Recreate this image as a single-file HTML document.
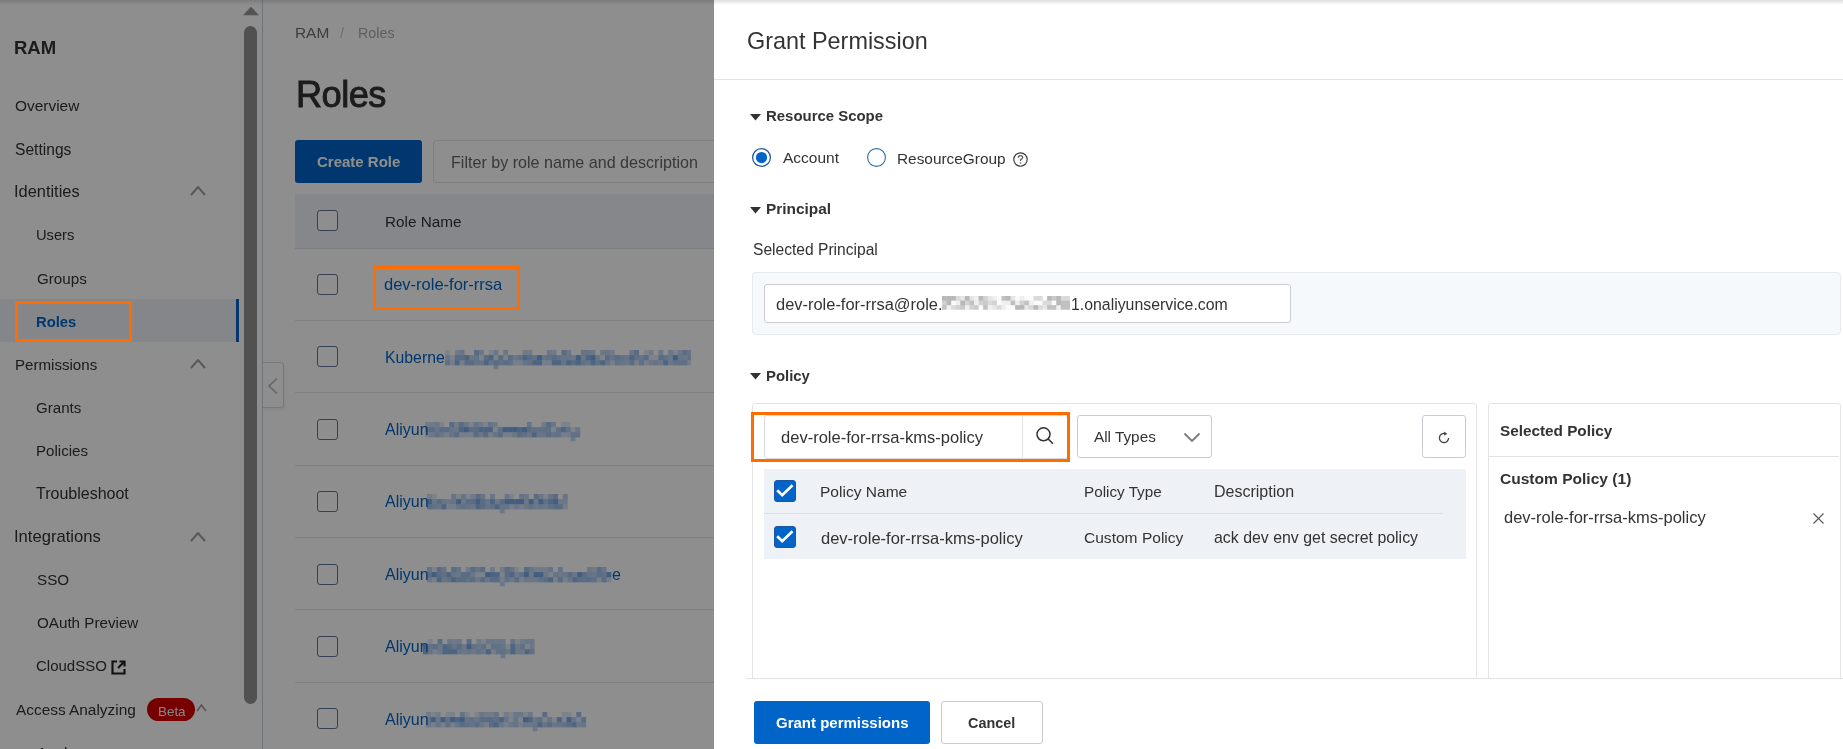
<!DOCTYPE html>
<html><head><meta charset="utf-8"><style>
html,body{margin:0;padding:0;width:1843px;height:749px;overflow:hidden;background:#fff;}
body{position:relative;font-family:"Liberation Sans",sans-serif;}
.t{position:absolute;white-space:nowrap;line-height:1;will-change:transform;font-family:"Liberation Sans",sans-serif;}
</style></head><body>
<div style="position:absolute;left:262px;top:0px;width:1px;height:749px;background:#c9d3dc"></div>
<div style="position:absolute;left:0px;top:299px;width:239px;height:43px;background:#edf1f7"></div>
<div style="position:absolute;left:236px;top:299px;width:3px;height:43px;background:#0064c8"></div>
<div class="t" style="left:14.1px;top:39.4px;font-size:18.5px;font-weight:700;color:#333;">RAM</div>
<div class="t" style="left:14.9px;top:97.8px;font-size:15.45px;font-weight:400;color:#333;">Overview</div>
<div class="t" style="left:14.6px;top:141.5px;font-size:15.6px;font-weight:400;color:#333;">Settings</div>
<div class="t" style="left:14.0px;top:183.4px;font-size:16.4px;font-weight:400;color:#333;">Identities</div>
<div class="t" style="left:35.9px;top:227.5px;font-size:14.7px;font-weight:400;color:#333;">Users</div>
<div class="t" style="left:36.5px;top:270.6px;font-size:15.2px;font-weight:400;color:#333;">Groups</div>
<div class="t" style="left:35.8px;top:314.6px;font-size:14.8px;font-weight:700;color:#0064c8;">Roles</div>
<div class="t" style="left:14.9px;top:356.8px;font-size:15.1px;font-weight:400;color:#333;">Permissions</div>
<div class="t" style="left:36.1px;top:399.5px;font-size:15.1px;font-weight:400;color:#333;">Grants</div>
<div class="t" style="left:35.6px;top:442.9px;font-size:15.1px;font-weight:400;color:#333;">Policies</div>
<div class="t" style="left:36.0px;top:485.8px;font-size:16.0px;font-weight:400;color:#333;">Troubleshoot</div>
<div class="t" style="left:13.6px;top:529.1px;font-size:16.6px;font-weight:400;color:#333;">Integrations</div>
<div class="t" style="left:36.5px;top:572.3px;font-size:15.2px;font-weight:400;color:#333;">SSO</div>
<div class="t" style="left:36.5px;top:615.4px;font-size:15.2px;font-weight:400;color:#333;">OAuth Preview</div>
<div class="t" style="left:35.9px;top:658.1px;font-size:15.0px;font-weight:400;color:#333;">CloudSSO</div>
<div class="t" style="left:15.6px;top:701.9px;font-size:15.4px;font-weight:400;color:#333;">Access Analyzing</div>
<div class="t" style="left:36.5px;top:744.7px;font-size:15.2px;font-weight:400;color:#333;">Analyzer</div>
<svg style="position:absolute;left:190px;top:186px" width="16" height="10" viewBox="0 0 16 10"><polyline points="1,9 8.0,1 15,9" fill="none" stroke="#9c9c9c" stroke-width="1.9"/></svg>
<svg style="position:absolute;left:190px;top:359px" width="16" height="10" viewBox="0 0 16 10"><polyline points="1,9 8.0,1 15,9" fill="none" stroke="#9c9c9c" stroke-width="1.9"/></svg>
<svg style="position:absolute;left:190px;top:532px" width="16" height="10" viewBox="0 0 16 10"><polyline points="1,9 8.0,1 15,9" fill="none" stroke="#9c9c9c" stroke-width="1.9"/></svg>
<svg style="position:absolute;left:196px;top:704px" width="11" height="8" viewBox="0 0 11 8"><polyline points="1,7 5.5,1 10,7" fill="none" stroke="#999" stroke-width="1.6"/></svg>
<svg style="position:absolute;left:111px;top:660px" width="15" height="15" viewBox="0 0 15 15"><path d="M6 1.5H1.5V13.5H13.5V9" fill="none" stroke="#222" stroke-width="2.2"/><path d="M7 8L13 2M8.5 1.5H13.5V6.5" fill="none" stroke="#222" stroke-width="2.2"/></svg>
<div style="position:absolute;left:147px;top:698px;width:48px;height:23px;border-radius:12px;background:#d40000;"></div>
<div class="t" style="left:157.5px;top:704.5px;font-size:13.4px;font-weight:400;color:#f0f0f0;">Beta</div>
<svg style="position:absolute;left:243px;top:6px" width="16" height="10" viewBox="0 0 16 10"><polygon points="0,9.2 8,0.7 16,9.2" fill="#969696"/></svg>
<div style="position:absolute;left:244px;top:26px;width:13px;height:678px;background:#929292;border-radius:6.5px"></div>
<div style="position:absolute;left:263px;top:362px;width:20px;height:44px;border:1px solid #d5d9de;border-left:none;border-radius:0 4px 4px 0;background:#fff;box-shadow:1px 2px 3px rgba(0,0,0,0.06)"></div>
<svg style="position:absolute;left:267px;top:377px" width="12" height="18" viewBox="0 0 12 18"><polyline points="10,1.5 2,9 10,16.5" fill="none" stroke="#b4b4b4" stroke-width="1.6"/></svg>
<div class="t" style="left:295.2px;top:24.7px;font-size:15.4px;font-weight:400;color:#707070;">RAM</div>
<div class="t" style="left:340.0px;top:25.6px;font-size:14.7px;font-weight:400;color:#c8c8c8;">/</div>
<div class="t" style="left:358.0px;top:26.1px;font-size:14.3px;font-weight:400;color:#aaa;">Roles</div>
<div class="t" style="left:296.1px;top:76.9px;font-size:36.2px;font-weight:400;color:#333;letter-spacing:-0.55px;-webkit-text-stroke:0.9px #333">Roles</div>
<div style="position:absolute;left:295px;top:140px;width:127px;height:43px;background:#0064c8;border-radius:3px"></div>
<div class="t" style="left:317.1px;top:154.2px;font-size:15.0px;font-weight:700;color:#fff;">Create Role</div>
<div style="position:absolute;left:433px;top:140px;width:400px;height:41px;border:1px solid #e2e4e8;border-radius:3px;background:#fff"></div>
<div class="t" style="left:451.3px;top:154.4px;font-size:16.1px;font-weight:400;color:#666;">Filter by role name and description</div>
<div style="position:absolute;left:295px;top:194px;width:600px;height:54px;background:#f0f3f9;border-bottom:1px solid #dde1e7"></div>
<div style="position:absolute;left:317px;top:210px;width:19px;height:19px;border:1px solid #5f7594;border-radius:3px;background:#fff"></div>
<div class="t" style="left:385.1px;top:213.8px;font-size:15.3px;font-weight:400;color:#333;">Role Name</div>
<div style="position:absolute;left:317px;top:274px;width:19px;height:19px;border:1px solid #5f7594;border-radius:3px;background:#fff"></div>
<div class="t" style="left:384.2px;top:275.7px;font-size:16.5px;font-weight:400;color:#0064c8;">dev-role-for-rrsa</div>
<div style="position:absolute;left:295px;top:320px;width:600px;height:1px;background:#e3e6ea"></div>
<div style="position:absolute;left:317px;top:346px;width:19px;height:19px;border:1px solid #5f7594;border-radius:3px;background:#fff"></div>
<div class="t" style="left:384.5px;top:349.7px;font-size:15.8px;font-weight:400;color:#0064c8;">Kuberne</div>
<svg style="position:absolute;left:445px;top:349.5px" width="246" height="21" fill="#2f78d8" ><rect x="0.0" y="0.0" width="4.90" height="5.15" fill-opacity="0.15"/><rect x="9.7" y="0.0" width="4.90" height="5.15" fill-opacity="0.25"/><rect x="14.5" y="0.0" width="4.90" height="5.15" fill-opacity="0.35"/><rect x="29.1" y="0.0" width="4.90" height="5.15" fill-opacity="0.45"/><rect x="33.9" y="0.0" width="4.90" height="5.15" fill-opacity="0.3"/><rect x="43.6" y="0.0" width="4.90" height="5.15" fill-opacity="0.15"/><rect x="48.5" y="0.0" width="4.90" height="5.15" fill-opacity="0.3"/><rect x="58.2" y="0.0" width="4.90" height="5.15" fill-opacity="0.3"/><rect x="77.6" y="0.0" width="4.90" height="5.15" fill-opacity="0.25"/><rect x="82.4" y="0.0" width="4.90" height="5.15" fill-opacity="0.25"/><rect x="101.8" y="0.0" width="4.90" height="5.15" fill-opacity="0.3"/><rect x="106.7" y="0.0" width="4.90" height="5.15" fill-opacity="0.25"/><rect x="116.4" y="0.0" width="4.90" height="5.15" fill-opacity="0.45"/><rect x="121.2" y="0.0" width="4.90" height="5.15" fill-opacity="0.3"/><rect x="135.8" y="0.0" width="4.90" height="5.15" fill-opacity="0.35"/><rect x="140.6" y="0.0" width="4.90" height="5.15" fill-opacity="0.35"/><rect x="145.5" y="0.0" width="4.90" height="5.15" fill-opacity="0.3"/><rect x="155.2" y="0.0" width="4.90" height="5.15" fill-opacity="0.3"/><rect x="160.0" y="0.0" width="4.90" height="5.15" fill-opacity="0.3"/><rect x="164.9" y="0.0" width="4.90" height="5.15" fill-opacity="0.25"/><rect x="184.3" y="0.0" width="4.90" height="5.15" fill-opacity="0.3"/><rect x="189.1" y="0.0" width="4.90" height="5.15" fill-opacity="0.45"/><rect x="198.8" y="0.0" width="4.90" height="5.15" fill-opacity="0.15"/><rect x="203.7" y="0.0" width="4.90" height="5.15" fill-opacity="0.25"/><rect x="213.4" y="0.0" width="4.90" height="5.15" fill-opacity="0.3"/><rect x="223.1" y="0.0" width="4.90" height="5.15" fill-opacity="0.3"/><rect x="227.9" y="0.0" width="4.90" height="5.15" fill-opacity="0.15"/><rect x="232.8" y="0.0" width="4.90" height="5.15" fill-opacity="0.3"/><rect x="237.6" y="0.0" width="4.90" height="5.15" fill-opacity="0.45"/><rect x="242.5" y="0.0" width="4.90" height="5.15" fill-opacity="0.35"/><rect x="0.0" y="5.1" width="4.90" height="5.15" fill-opacity="0.3"/><rect x="4.8" y="5.1" width="4.90" height="5.15" fill-opacity="0.15"/><rect x="9.7" y="5.1" width="4.90" height="5.15" fill-opacity="0.45"/><rect x="14.5" y="5.1" width="4.90" height="5.15" fill-opacity="0.45"/><rect x="19.4" y="5.1" width="4.90" height="5.15" fill-opacity="0.55"/><rect x="24.2" y="5.1" width="4.90" height="5.15" fill-opacity="0.3"/><rect x="29.1" y="5.1" width="4.90" height="5.15" fill-opacity="0.35"/><rect x="33.9" y="5.1" width="4.90" height="5.15" fill-opacity="0.15"/><rect x="38.8" y="5.1" width="4.90" height="5.15" fill-opacity="0.45"/><rect x="43.6" y="5.1" width="4.90" height="5.15" fill-opacity="0.55"/><rect x="48.5" y="5.1" width="4.90" height="5.15" fill-opacity="0.15"/><rect x="53.3" y="5.1" width="4.90" height="5.15" fill-opacity="0.45"/><rect x="58.2" y="5.1" width="4.90" height="5.15" fill-opacity="0.15"/><rect x="63.0" y="5.1" width="4.90" height="5.15" fill-opacity="0.45"/><rect x="67.9" y="5.1" width="4.90" height="5.15" fill-opacity="0.3"/><rect x="72.8" y="5.1" width="4.90" height="5.15" fill-opacity="0.4"/><rect x="77.6" y="5.1" width="4.90" height="5.15" fill-opacity="0.55"/><rect x="82.4" y="5.1" width="4.90" height="5.15" fill-opacity="0.45"/><rect x="87.3" y="5.1" width="4.90" height="5.15" fill-opacity="0.4"/><rect x="92.1" y="5.1" width="4.90" height="5.15" fill-opacity="0.65"/><rect x="97.0" y="5.1" width="4.90" height="5.15" fill-opacity="0.35"/><rect x="101.8" y="5.1" width="4.90" height="5.15" fill-opacity="0.4"/><rect x="106.7" y="5.1" width="4.90" height="5.15" fill-opacity="0.45"/><rect x="111.5" y="5.1" width="4.90" height="5.15" fill-opacity="0.4"/><rect x="116.4" y="5.1" width="4.90" height="5.15" fill-opacity="0.35"/><rect x="121.2" y="5.1" width="4.90" height="5.15" fill-opacity="0.35"/><rect x="126.1" y="5.1" width="4.90" height="5.15" fill-opacity="0.3"/><rect x="130.9" y="5.1" width="4.90" height="5.15" fill-opacity="0.65"/><rect x="135.8" y="5.1" width="4.90" height="5.15" fill-opacity="0.3"/><rect x="140.6" y="5.1" width="4.90" height="5.15" fill-opacity="0.55"/><rect x="145.5" y="5.1" width="4.90" height="5.15" fill-opacity="0.65"/><rect x="150.3" y="5.1" width="4.90" height="5.15" fill-opacity="0.3"/><rect x="155.2" y="5.1" width="4.90" height="5.15" fill-opacity="0.15"/><rect x="160.0" y="5.1" width="4.90" height="5.15" fill-opacity="0.45"/><rect x="164.9" y="5.1" width="4.90" height="5.15" fill-opacity="0.35"/><rect x="169.8" y="5.1" width="4.90" height="5.15" fill-opacity="0.45"/><rect x="174.6" y="5.1" width="4.90" height="5.15" fill-opacity="0.4"/><rect x="179.4" y="5.1" width="4.90" height="5.15" fill-opacity="0.35"/><rect x="184.3" y="5.1" width="4.90" height="5.15" fill-opacity="0.55"/><rect x="189.1" y="5.1" width="4.90" height="5.15" fill-opacity="0.4"/><rect x="194.0" y="5.1" width="4.90" height="5.15" fill-opacity="0.35"/><rect x="198.8" y="5.1" width="4.90" height="5.15" fill-opacity="0.45"/><rect x="203.7" y="5.1" width="4.90" height="5.15" fill-opacity="0.15"/><rect x="208.5" y="5.1" width="4.90" height="5.15" fill-opacity="0.15"/><rect x="213.4" y="5.1" width="4.90" height="5.15" fill-opacity="0.45"/><rect x="218.2" y="5.1" width="4.90" height="5.15" fill-opacity="0.4"/><rect x="223.1" y="5.1" width="4.90" height="5.15" fill-opacity="0.3"/><rect x="227.9" y="5.1" width="4.90" height="5.15" fill-opacity="0.65"/><rect x="232.8" y="5.1" width="4.90" height="5.15" fill-opacity="0.35"/><rect x="237.6" y="5.1" width="4.90" height="5.15" fill-opacity="0.3"/><rect x="242.5" y="5.1" width="4.90" height="5.15" fill-opacity="0.4"/><rect x="0.0" y="10.2" width="4.90" height="5.15" fill-opacity="0.4"/><rect x="4.8" y="10.2" width="4.90" height="5.15" fill-opacity="0.2"/><rect x="9.7" y="10.2" width="4.90" height="5.15" fill-opacity="0.55"/><rect x="14.5" y="10.2" width="4.90" height="5.15" fill-opacity="0.2"/><rect x="19.4" y="10.2" width="4.90" height="5.15" fill-opacity="0.45"/><rect x="24.2" y="10.2" width="4.90" height="5.15" fill-opacity="0.45"/><rect x="29.1" y="10.2" width="4.90" height="5.15" fill-opacity="0.35"/><rect x="33.9" y="10.2" width="4.90" height="5.15" fill-opacity="0.35"/><rect x="38.8" y="10.2" width="4.90" height="5.15" fill-opacity="0.55"/><rect x="43.6" y="10.2" width="4.90" height="5.15" fill-opacity="0.35"/><rect x="48.5" y="10.2" width="4.90" height="5.15" fill-opacity="0.45"/><rect x="53.3" y="10.2" width="4.90" height="5.15" fill-opacity="0.4"/><rect x="58.2" y="10.2" width="4.90" height="5.15" fill-opacity="0.45"/><rect x="63.0" y="10.2" width="4.90" height="5.15" fill-opacity="0.4"/><rect x="67.9" y="10.2" width="4.90" height="5.15" fill-opacity="0.2"/><rect x="72.8" y="10.2" width="4.90" height="5.15" fill-opacity="0.2"/><rect x="77.6" y="10.2" width="4.90" height="5.15" fill-opacity="0.35"/><rect x="82.4" y="10.2" width="4.90" height="5.15" fill-opacity="0.4"/><rect x="87.3" y="10.2" width="4.90" height="5.15" fill-opacity="0.55"/><rect x="92.1" y="10.2" width="4.90" height="5.15" fill-opacity="0.55"/><rect x="97.0" y="10.2" width="4.90" height="5.15" fill-opacity="0.2"/><rect x="101.8" y="10.2" width="4.90" height="5.15" fill-opacity="0.2"/><rect x="106.7" y="10.2" width="4.90" height="5.15" fill-opacity="0.55"/><rect x="111.5" y="10.2" width="4.90" height="5.15" fill-opacity="0.55"/><rect x="116.4" y="10.2" width="4.90" height="5.15" fill-opacity="0.35"/><rect x="121.2" y="10.2" width="4.90" height="5.15" fill-opacity="0.55"/><rect x="126.1" y="10.2" width="4.90" height="5.15" fill-opacity="0.45"/><rect x="130.9" y="10.2" width="4.90" height="5.15" fill-opacity="0.55"/><rect x="135.8" y="10.2" width="4.90" height="5.15" fill-opacity="0.4"/><rect x="140.6" y="10.2" width="4.90" height="5.15" fill-opacity="0.35"/><rect x="145.5" y="10.2" width="4.90" height="5.15" fill-opacity="0.55"/><rect x="150.3" y="10.2" width="4.90" height="5.15" fill-opacity="0.4"/><rect x="155.2" y="10.2" width="4.90" height="5.15" fill-opacity="0.55"/><rect x="160.0" y="10.2" width="4.90" height="5.15" fill-opacity="0.35"/><rect x="164.9" y="10.2" width="4.90" height="5.15" fill-opacity="0.2"/><rect x="169.8" y="10.2" width="4.90" height="5.15" fill-opacity="0.4"/><rect x="174.6" y="10.2" width="4.90" height="5.15" fill-opacity="0.35"/><rect x="179.4" y="10.2" width="4.90" height="5.15" fill-opacity="0.3"/><rect x="184.3" y="10.2" width="4.90" height="5.15" fill-opacity="0.45"/><rect x="189.1" y="10.2" width="4.90" height="5.15" fill-opacity="0.2"/><rect x="194.0" y="10.2" width="4.90" height="5.15" fill-opacity="0.4"/><rect x="198.8" y="10.2" width="4.90" height="5.15" fill-opacity="0.2"/><rect x="203.7" y="10.2" width="4.90" height="5.15" fill-opacity="0.3"/><rect x="208.5" y="10.2" width="4.90" height="5.15" fill-opacity="0.35"/><rect x="213.4" y="10.2" width="4.90" height="5.15" fill-opacity="0.3"/><rect x="218.2" y="10.2" width="4.90" height="5.15" fill-opacity="0.55"/><rect x="223.1" y="10.2" width="4.90" height="5.15" fill-opacity="0.3"/><rect x="227.9" y="10.2" width="4.90" height="5.15" fill-opacity="0.4"/><rect x="232.8" y="10.2" width="4.90" height="5.15" fill-opacity="0.4"/><rect x="237.6" y="10.2" width="4.90" height="5.15" fill-opacity="0.4"/><rect x="242.5" y="10.2" width="4.90" height="5.15" fill-opacity="0.2"/><rect x="48.5" y="15.3" width="4.85" height="4" fill-opacity="0.3"/></svg>
<div style="position:absolute;left:295px;top:392px;width:600px;height:1px;background:#e3e6ea"></div>
<div style="position:absolute;left:317px;top:419px;width:19px;height:19px;border:1px solid #5f7594;border-radius:3px;background:#fff"></div>
<div class="t" style="left:384.5px;top:422.0px;font-size:16.0px;font-weight:400;color:#0064c8;">Aliyun</div>
<svg style="position:absolute;left:425px;top:421.9px" width="156" height="21" fill="#2f78d8" ><rect x="0.0" y="0.0" width="4.90" height="5.15" fill-opacity="0.25"/><rect x="4.8" y="0.0" width="4.90" height="5.15" fill-opacity="0.25"/><rect x="9.7" y="0.0" width="4.90" height="5.15" fill-opacity="0.3"/><rect x="14.5" y="0.0" width="4.90" height="5.15" fill-opacity="0.15"/><rect x="24.2" y="0.0" width="4.90" height="5.15" fill-opacity="0.45"/><rect x="29.1" y="0.0" width="4.90" height="5.15" fill-opacity="0.25"/><rect x="33.9" y="0.0" width="4.90" height="5.15" fill-opacity="0.45"/><rect x="38.8" y="0.0" width="4.90" height="5.15" fill-opacity="0.3"/><rect x="43.6" y="0.0" width="4.90" height="5.15" fill-opacity="0.15"/><rect x="48.5" y="0.0" width="4.90" height="5.15" fill-opacity="0.35"/><rect x="53.3" y="0.0" width="4.90" height="5.15" fill-opacity="0.25"/><rect x="58.2" y="0.0" width="4.90" height="5.15" fill-opacity="0.15"/><rect x="63.0" y="0.0" width="4.90" height="5.15" fill-opacity="0.35"/><rect x="67.9" y="0.0" width="4.90" height="5.15" fill-opacity="0.25"/><rect x="101.8" y="0.0" width="4.90" height="5.15" fill-opacity="0.35"/><rect x="116.4" y="0.0" width="4.90" height="5.15" fill-opacity="0.25"/><rect x="121.2" y="0.0" width="4.90" height="5.15" fill-opacity="0.45"/><rect x="126.1" y="0.0" width="4.90" height="5.15" fill-opacity="0.3"/><rect x="135.8" y="0.0" width="4.90" height="5.15" fill-opacity="0.15"/><rect x="140.6" y="0.0" width="4.90" height="5.15" fill-opacity="0.15"/><rect x="0.0" y="5.1" width="4.90" height="5.15" fill-opacity="0.4"/><rect x="4.8" y="5.1" width="4.90" height="5.15" fill-opacity="0.45"/><rect x="9.7" y="5.1" width="4.90" height="5.15" fill-opacity="0.35"/><rect x="14.5" y="5.1" width="4.90" height="5.15" fill-opacity="0.45"/><rect x="19.4" y="5.1" width="4.90" height="5.15" fill-opacity="0.45"/><rect x="24.2" y="5.1" width="4.90" height="5.15" fill-opacity="0.35"/><rect x="29.1" y="5.1" width="4.90" height="5.15" fill-opacity="0.3"/><rect x="33.9" y="5.1" width="4.90" height="5.15" fill-opacity="0.55"/><rect x="38.8" y="5.1" width="4.90" height="5.15" fill-opacity="0.65"/><rect x="43.6" y="5.1" width="4.90" height="5.15" fill-opacity="0.45"/><rect x="48.5" y="5.1" width="4.90" height="5.15" fill-opacity="0.45"/><rect x="53.3" y="5.1" width="4.90" height="5.15" fill-opacity="0.55"/><rect x="58.2" y="5.1" width="4.90" height="5.15" fill-opacity="0.55"/><rect x="63.0" y="5.1" width="4.90" height="5.15" fill-opacity="0.55"/><rect x="67.9" y="5.1" width="4.90" height="5.15" fill-opacity="0.15"/><rect x="72.8" y="5.1" width="4.90" height="5.15" fill-opacity="0.4"/><rect x="77.6" y="5.1" width="4.90" height="5.15" fill-opacity="0.65"/><rect x="82.4" y="5.1" width="4.90" height="5.15" fill-opacity="0.65"/><rect x="87.3" y="5.1" width="4.90" height="5.15" fill-opacity="0.65"/><rect x="92.1" y="5.1" width="4.90" height="5.15" fill-opacity="0.55"/><rect x="97.0" y="5.1" width="4.90" height="5.15" fill-opacity="0.65"/><rect x="101.8" y="5.1" width="4.90" height="5.15" fill-opacity="0.45"/><rect x="106.7" y="5.1" width="4.90" height="5.15" fill-opacity="0.4"/><rect x="111.5" y="5.1" width="4.90" height="5.15" fill-opacity="0.4"/><rect x="116.4" y="5.1" width="4.90" height="5.15" fill-opacity="0.4"/><rect x="121.2" y="5.1" width="4.90" height="5.15" fill-opacity="0.4"/><rect x="126.1" y="5.1" width="4.90" height="5.15" fill-opacity="0.15"/><rect x="130.9" y="5.1" width="4.90" height="5.15" fill-opacity="0.4"/><rect x="135.8" y="5.1" width="4.90" height="5.15" fill-opacity="0.55"/><rect x="140.6" y="5.1" width="4.90" height="5.15" fill-opacity="0.4"/><rect x="145.5" y="5.1" width="4.90" height="5.15" fill-opacity="0.15"/><rect x="150.3" y="5.1" width="4.90" height="5.15" fill-opacity="0.3"/><rect x="0.0" y="10.2" width="4.90" height="5.15" fill-opacity="0.2"/><rect x="4.8" y="10.2" width="4.90" height="5.15" fill-opacity="0.3"/><rect x="9.7" y="10.2" width="4.90" height="5.15" fill-opacity="0.4"/><rect x="14.5" y="10.2" width="4.90" height="5.15" fill-opacity="0.3"/><rect x="19.4" y="10.2" width="4.90" height="5.15" fill-opacity="0.2"/><rect x="24.2" y="10.2" width="4.90" height="5.15" fill-opacity="0.35"/><rect x="29.1" y="10.2" width="4.90" height="5.15" fill-opacity="0.45"/><rect x="33.9" y="10.2" width="4.90" height="5.15" fill-opacity="0.2"/><rect x="38.8" y="10.2" width="4.90" height="5.15" fill-opacity="0.2"/><rect x="43.6" y="10.2" width="4.90" height="5.15" fill-opacity="0.2"/><rect x="48.5" y="10.2" width="4.90" height="5.15" fill-opacity="0.45"/><rect x="53.3" y="10.2" width="4.90" height="5.15" fill-opacity="0.3"/><rect x="58.2" y="10.2" width="4.90" height="5.15" fill-opacity="0.45"/><rect x="63.0" y="10.2" width="4.90" height="5.15" fill-opacity="0.2"/><rect x="67.9" y="10.2" width="4.90" height="5.15" fill-opacity="0.35"/><rect x="72.8" y="10.2" width="4.90" height="5.15" fill-opacity="0.45"/><rect x="77.6" y="10.2" width="4.90" height="5.15" fill-opacity="0.2"/><rect x="82.4" y="10.2" width="4.90" height="5.15" fill-opacity="0.2"/><rect x="87.3" y="10.2" width="4.90" height="5.15" fill-opacity="0.3"/><rect x="92.1" y="10.2" width="4.90" height="5.15" fill-opacity="0.45"/><rect x="97.0" y="10.2" width="4.90" height="5.15" fill-opacity="0.4"/><rect x="101.8" y="10.2" width="4.90" height="5.15" fill-opacity="0.3"/><rect x="106.7" y="10.2" width="4.90" height="5.15" fill-opacity="0.55"/><rect x="111.5" y="10.2" width="4.90" height="5.15" fill-opacity="0.35"/><rect x="116.4" y="10.2" width="4.90" height="5.15" fill-opacity="0.35"/><rect x="121.2" y="10.2" width="4.90" height="5.15" fill-opacity="0.45"/><rect x="126.1" y="10.2" width="4.90" height="5.15" fill-opacity="0.35"/><rect x="130.9" y="10.2" width="4.90" height="5.15" fill-opacity="0.4"/><rect x="135.8" y="10.2" width="4.90" height="5.15" fill-opacity="0.2"/><rect x="140.6" y="10.2" width="4.90" height="5.15" fill-opacity="0.2"/><rect x="145.5" y="10.2" width="4.90" height="5.15" fill-opacity="0.4"/><rect x="150.3" y="10.2" width="4.90" height="5.15" fill-opacity="0.4"/><rect x="145.5" y="15.3" width="4.85" height="4" fill-opacity="0.3"/></svg>
<div style="position:absolute;left:295px;top:465px;width:600px;height:1px;background:#e3e6ea"></div>
<div style="position:absolute;left:317px;top:491px;width:19px;height:19px;border:1px solid #5f7594;border-radius:3px;background:#fff"></div>
<div class="t" style="left:384.5px;top:494.4px;font-size:16.0px;font-weight:400;color:#0064c8;">Aliyun</div>
<svg style="position:absolute;left:427px;top:494.3px" width="143" height="21" fill="#2f78d8" ><rect x="0.0" y="0.0" width="4.90" height="5.15" fill-opacity="0.25"/><rect x="4.8" y="0.0" width="4.90" height="5.15" fill-opacity="0.15"/><rect x="24.2" y="0.0" width="4.90" height="5.15" fill-opacity="0.35"/><rect x="29.1" y="0.0" width="4.90" height="5.15" fill-opacity="0.15"/><rect x="33.9" y="0.0" width="4.90" height="5.15" fill-opacity="0.35"/><rect x="38.8" y="0.0" width="4.90" height="5.15" fill-opacity="0.15"/><rect x="43.6" y="0.0" width="4.90" height="5.15" fill-opacity="0.25"/><rect x="48.5" y="0.0" width="4.90" height="5.15" fill-opacity="0.45"/><rect x="53.3" y="0.0" width="4.90" height="5.15" fill-opacity="0.35"/><rect x="63.0" y="0.0" width="4.90" height="5.15" fill-opacity="0.3"/><rect x="77.6" y="0.0" width="4.90" height="5.15" fill-opacity="0.3"/><rect x="82.4" y="0.0" width="4.90" height="5.15" fill-opacity="0.15"/><rect x="92.1" y="0.0" width="4.90" height="5.15" fill-opacity="0.35"/><rect x="97.0" y="0.0" width="4.90" height="5.15" fill-opacity="0.3"/><rect x="106.7" y="0.0" width="4.90" height="5.15" fill-opacity="0.45"/><rect x="111.5" y="0.0" width="4.90" height="5.15" fill-opacity="0.3"/><rect x="116.4" y="0.0" width="4.90" height="5.15" fill-opacity="0.15"/><rect x="121.2" y="0.0" width="4.90" height="5.15" fill-opacity="0.35"/><rect x="126.1" y="0.0" width="4.90" height="5.15" fill-opacity="0.45"/><rect x="135.8" y="0.0" width="4.90" height="5.15" fill-opacity="0.35"/><rect x="0.0" y="5.1" width="4.90" height="5.15" fill-opacity="0.65"/><rect x="4.8" y="5.1" width="4.90" height="5.15" fill-opacity="0.35"/><rect x="9.7" y="5.1" width="4.90" height="5.15" fill-opacity="0.45"/><rect x="14.5" y="5.1" width="4.90" height="5.15" fill-opacity="0.35"/><rect x="19.4" y="5.1" width="4.90" height="5.15" fill-opacity="0.3"/><rect x="24.2" y="5.1" width="4.90" height="5.15" fill-opacity="0.35"/><rect x="29.1" y="5.1" width="4.90" height="5.15" fill-opacity="0.65"/><rect x="33.9" y="5.1" width="4.90" height="5.15" fill-opacity="0.3"/><rect x="38.8" y="5.1" width="4.90" height="5.15" fill-opacity="0.45"/><rect x="43.6" y="5.1" width="4.90" height="5.15" fill-opacity="0.45"/><rect x="48.5" y="5.1" width="4.90" height="5.15" fill-opacity="0.65"/><rect x="53.3" y="5.1" width="4.90" height="5.15" fill-opacity="0.45"/><rect x="58.2" y="5.1" width="4.90" height="5.15" fill-opacity="0.35"/><rect x="63.0" y="5.1" width="4.90" height="5.15" fill-opacity="0.55"/><rect x="67.9" y="5.1" width="4.90" height="5.15" fill-opacity="0.3"/><rect x="72.8" y="5.1" width="4.90" height="5.15" fill-opacity="0.45"/><rect x="77.6" y="5.1" width="4.90" height="5.15" fill-opacity="0.65"/><rect x="82.4" y="5.1" width="4.90" height="5.15" fill-opacity="0.65"/><rect x="87.3" y="5.1" width="4.90" height="5.15" fill-opacity="0.65"/><rect x="92.1" y="5.1" width="4.90" height="5.15" fill-opacity="0.65"/><rect x="97.0" y="5.1" width="4.90" height="5.15" fill-opacity="0.3"/><rect x="101.8" y="5.1" width="4.90" height="5.15" fill-opacity="0.65"/><rect x="106.7" y="5.1" width="4.90" height="5.15" fill-opacity="0.3"/><rect x="111.5" y="5.1" width="4.90" height="5.15" fill-opacity="0.65"/><rect x="116.4" y="5.1" width="4.90" height="5.15" fill-opacity="0.4"/><rect x="121.2" y="5.1" width="4.90" height="5.15" fill-opacity="0.55"/><rect x="126.1" y="5.1" width="4.90" height="5.15" fill-opacity="0.65"/><rect x="130.9" y="5.1" width="4.90" height="5.15" fill-opacity="0.3"/><rect x="135.8" y="5.1" width="4.90" height="5.15" fill-opacity="0.3"/><rect x="0.0" y="10.2" width="4.90" height="5.15" fill-opacity="0.45"/><rect x="4.8" y="10.2" width="4.90" height="5.15" fill-opacity="0.4"/><rect x="9.7" y="10.2" width="4.90" height="5.15" fill-opacity="0.35"/><rect x="14.5" y="10.2" width="4.90" height="5.15" fill-opacity="0.55"/><rect x="19.4" y="10.2" width="4.90" height="5.15" fill-opacity="0.2"/><rect x="24.2" y="10.2" width="4.90" height="5.15" fill-opacity="0.2"/><rect x="29.1" y="10.2" width="4.90" height="5.15" fill-opacity="0.35"/><rect x="33.9" y="10.2" width="4.90" height="5.15" fill-opacity="0.4"/><rect x="38.8" y="10.2" width="4.90" height="5.15" fill-opacity="0.35"/><rect x="43.6" y="10.2" width="4.90" height="5.15" fill-opacity="0.3"/><rect x="48.5" y="10.2" width="4.90" height="5.15" fill-opacity="0.55"/><rect x="53.3" y="10.2" width="4.90" height="5.15" fill-opacity="0.45"/><rect x="58.2" y="10.2" width="4.90" height="5.15" fill-opacity="0.35"/><rect x="63.0" y="10.2" width="4.90" height="5.15" fill-opacity="0.4"/><rect x="67.9" y="10.2" width="4.90" height="5.15" fill-opacity="0.55"/><rect x="72.8" y="10.2" width="4.90" height="5.15" fill-opacity="0.35"/><rect x="77.6" y="10.2" width="4.90" height="5.15" fill-opacity="0.35"/><rect x="82.4" y="10.2" width="4.90" height="5.15" fill-opacity="0.2"/><rect x="87.3" y="10.2" width="4.90" height="5.15" fill-opacity="0.3"/><rect x="92.1" y="10.2" width="4.90" height="5.15" fill-opacity="0.2"/><rect x="97.0" y="10.2" width="4.90" height="5.15" fill-opacity="0.3"/><rect x="101.8" y="10.2" width="4.90" height="5.15" fill-opacity="0.4"/><rect x="106.7" y="10.2" width="4.90" height="5.15" fill-opacity="0.3"/><rect x="111.5" y="10.2" width="4.90" height="5.15" fill-opacity="0.35"/><rect x="116.4" y="10.2" width="4.90" height="5.15" fill-opacity="0.3"/><rect x="121.2" y="10.2" width="4.90" height="5.15" fill-opacity="0.4"/><rect x="126.1" y="10.2" width="4.90" height="5.15" fill-opacity="0.45"/><rect x="130.9" y="10.2" width="4.90" height="5.15" fill-opacity="0.45"/><rect x="135.8" y="10.2" width="4.90" height="5.15" fill-opacity="0.2"/><rect x="72.8" y="15.3" width="4.85" height="4" fill-opacity="0.3"/></svg>
<div style="position:absolute;left:295px;top:537px;width:600px;height:1px;background:#e3e6ea"></div>
<div style="position:absolute;left:317px;top:564px;width:19px;height:19px;border:1px solid #5f7594;border-radius:3px;background:#fff"></div>
<div class="t" style="left:384.5px;top:566.8px;font-size:16.0px;font-weight:400;color:#0064c8;">Aliyun</div>
<svg style="position:absolute;left:427px;top:566.7px" width="186" height="21" fill="#2f78d8" ><rect x="0.0" y="0.0" width="4.90" height="5.15" fill-opacity="0.35"/><rect x="4.8" y="0.0" width="4.90" height="5.15" fill-opacity="0.15"/><rect x="9.7" y="0.0" width="4.90" height="5.15" fill-opacity="0.45"/><rect x="14.5" y="0.0" width="4.90" height="5.15" fill-opacity="0.35"/><rect x="24.2" y="0.0" width="4.90" height="5.15" fill-opacity="0.45"/><rect x="29.1" y="0.0" width="4.90" height="5.15" fill-opacity="0.35"/><rect x="38.8" y="0.0" width="4.90" height="5.15" fill-opacity="0.25"/><rect x="43.6" y="0.0" width="4.90" height="5.15" fill-opacity="0.45"/><rect x="48.5" y="0.0" width="4.90" height="5.15" fill-opacity="0.35"/><rect x="53.3" y="0.0" width="4.90" height="5.15" fill-opacity="0.45"/><rect x="63.0" y="0.0" width="4.90" height="5.15" fill-opacity="0.25"/><rect x="72.8" y="0.0" width="4.90" height="5.15" fill-opacity="0.25"/><rect x="77.6" y="0.0" width="4.90" height="5.15" fill-opacity="0.45"/><rect x="82.4" y="0.0" width="4.90" height="5.15" fill-opacity="0.35"/><rect x="87.3" y="0.0" width="4.90" height="5.15" fill-opacity="0.15"/><rect x="97.0" y="0.0" width="4.90" height="5.15" fill-opacity="0.45"/><rect x="101.8" y="0.0" width="4.90" height="5.15" fill-opacity="0.35"/><rect x="106.7" y="0.0" width="4.90" height="5.15" fill-opacity="0.25"/><rect x="111.5" y="0.0" width="4.90" height="5.15" fill-opacity="0.25"/><rect x="116.4" y="0.0" width="4.90" height="5.15" fill-opacity="0.25"/><rect x="121.2" y="0.0" width="4.90" height="5.15" fill-opacity="0.35"/><rect x="130.9" y="0.0" width="4.90" height="5.15" fill-opacity="0.35"/><rect x="160.0" y="0.0" width="4.90" height="5.15" fill-opacity="0.3"/><rect x="164.9" y="0.0" width="4.90" height="5.15" fill-opacity="0.25"/><rect x="169.8" y="0.0" width="4.90" height="5.15" fill-opacity="0.45"/><rect x="174.6" y="0.0" width="4.90" height="5.15" fill-opacity="0.35"/><rect x="0.0" y="5.1" width="4.90" height="5.15" fill-opacity="0.45"/><rect x="4.8" y="5.1" width="4.90" height="5.15" fill-opacity="0.65"/><rect x="9.7" y="5.1" width="4.90" height="5.15" fill-opacity="0.45"/><rect x="14.5" y="5.1" width="4.90" height="5.15" fill-opacity="0.4"/><rect x="19.4" y="5.1" width="4.90" height="5.15" fill-opacity="0.55"/><rect x="24.2" y="5.1" width="4.90" height="5.15" fill-opacity="0.35"/><rect x="29.1" y="5.1" width="4.90" height="5.15" fill-opacity="0.3"/><rect x="33.9" y="5.1" width="4.90" height="5.15" fill-opacity="0.45"/><rect x="38.8" y="5.1" width="4.90" height="5.15" fill-opacity="0.45"/><rect x="43.6" y="5.1" width="4.90" height="5.15" fill-opacity="0.3"/><rect x="48.5" y="5.1" width="4.90" height="5.15" fill-opacity="0.15"/><rect x="53.3" y="5.1" width="4.90" height="5.15" fill-opacity="0.15"/><rect x="58.2" y="5.1" width="4.90" height="5.15" fill-opacity="0.65"/><rect x="63.0" y="5.1" width="4.90" height="5.15" fill-opacity="0.55"/><rect x="67.9" y="5.1" width="4.90" height="5.15" fill-opacity="0.55"/><rect x="72.8" y="5.1" width="4.90" height="5.15" fill-opacity="0.15"/><rect x="77.6" y="5.1" width="4.90" height="5.15" fill-opacity="0.45"/><rect x="82.4" y="5.1" width="4.90" height="5.15" fill-opacity="0.55"/><rect x="87.3" y="5.1" width="4.90" height="5.15" fill-opacity="0.3"/><rect x="92.1" y="5.1" width="4.90" height="5.15" fill-opacity="0.4"/><rect x="97.0" y="5.1" width="4.90" height="5.15" fill-opacity="0.65"/><rect x="101.8" y="5.1" width="4.90" height="5.15" fill-opacity="0.3"/><rect x="106.7" y="5.1" width="4.90" height="5.15" fill-opacity="0.65"/><rect x="111.5" y="5.1" width="4.90" height="5.15" fill-opacity="0.65"/><rect x="116.4" y="5.1" width="4.90" height="5.15" fill-opacity="0.3"/><rect x="121.2" y="5.1" width="4.90" height="5.15" fill-opacity="0.15"/><rect x="126.1" y="5.1" width="4.90" height="5.15" fill-opacity="0.35"/><rect x="130.9" y="5.1" width="4.90" height="5.15" fill-opacity="0.3"/><rect x="135.8" y="5.1" width="4.90" height="5.15" fill-opacity="0.35"/><rect x="140.6" y="5.1" width="4.90" height="5.15" fill-opacity="0.45"/><rect x="145.5" y="5.1" width="4.90" height="5.15" fill-opacity="0.3"/><rect x="150.3" y="5.1" width="4.90" height="5.15" fill-opacity="0.65"/><rect x="155.2" y="5.1" width="4.90" height="5.15" fill-opacity="0.45"/><rect x="160.0" y="5.1" width="4.90" height="5.15" fill-opacity="0.35"/><rect x="164.9" y="5.1" width="4.90" height="5.15" fill-opacity="0.35"/><rect x="169.8" y="5.1" width="4.90" height="5.15" fill-opacity="0.45"/><rect x="174.6" y="5.1" width="4.90" height="5.15" fill-opacity="0.4"/><rect x="179.4" y="5.1" width="4.90" height="5.15" fill-opacity="0.65"/><rect x="0.0" y="10.2" width="4.90" height="5.15" fill-opacity="0.3"/><rect x="4.8" y="10.2" width="4.90" height="5.15" fill-opacity="0.2"/><rect x="9.7" y="10.2" width="4.90" height="5.15" fill-opacity="0.55"/><rect x="14.5" y="10.2" width="4.90" height="5.15" fill-opacity="0.35"/><rect x="19.4" y="10.2" width="4.90" height="5.15" fill-opacity="0.4"/><rect x="24.2" y="10.2" width="4.90" height="5.15" fill-opacity="0.55"/><rect x="29.1" y="10.2" width="4.90" height="5.15" fill-opacity="0.45"/><rect x="33.9" y="10.2" width="4.90" height="5.15" fill-opacity="0.45"/><rect x="38.8" y="10.2" width="4.90" height="5.15" fill-opacity="0.4"/><rect x="43.6" y="10.2" width="4.90" height="5.15" fill-opacity="0.45"/><rect x="48.5" y="10.2" width="4.90" height="5.15" fill-opacity="0.3"/><rect x="53.3" y="10.2" width="4.90" height="5.15" fill-opacity="0.45"/><rect x="58.2" y="10.2" width="4.90" height="5.15" fill-opacity="0.3"/><rect x="63.0" y="10.2" width="4.90" height="5.15" fill-opacity="0.45"/><rect x="67.9" y="10.2" width="4.90" height="5.15" fill-opacity="0.45"/><rect x="72.8" y="10.2" width="4.90" height="5.15" fill-opacity="0.2"/><rect x="77.6" y="10.2" width="4.90" height="5.15" fill-opacity="0.4"/><rect x="82.4" y="10.2" width="4.90" height="5.15" fill-opacity="0.3"/><rect x="87.3" y="10.2" width="4.90" height="5.15" fill-opacity="0.45"/><rect x="92.1" y="10.2" width="4.90" height="5.15" fill-opacity="0.2"/><rect x="97.0" y="10.2" width="4.90" height="5.15" fill-opacity="0.3"/><rect x="101.8" y="10.2" width="4.90" height="5.15" fill-opacity="0.3"/><rect x="106.7" y="10.2" width="4.90" height="5.15" fill-opacity="0.3"/><rect x="111.5" y="10.2" width="4.90" height="5.15" fill-opacity="0.4"/><rect x="116.4" y="10.2" width="4.90" height="5.15" fill-opacity="0.45"/><rect x="121.2" y="10.2" width="4.90" height="5.15" fill-opacity="0.55"/><rect x="126.1" y="10.2" width="4.90" height="5.15" fill-opacity="0.2"/><rect x="130.9" y="10.2" width="4.90" height="5.15" fill-opacity="0.45"/><rect x="135.8" y="10.2" width="4.90" height="5.15" fill-opacity="0.2"/><rect x="140.6" y="10.2" width="4.90" height="5.15" fill-opacity="0.35"/><rect x="145.5" y="10.2" width="4.90" height="5.15" fill-opacity="0.55"/><rect x="150.3" y="10.2" width="4.90" height="5.15" fill-opacity="0.45"/><rect x="155.2" y="10.2" width="4.90" height="5.15" fill-opacity="0.45"/><rect x="160.0" y="10.2" width="4.90" height="5.15" fill-opacity="0.45"/><rect x="164.9" y="10.2" width="4.90" height="5.15" fill-opacity="0.4"/><rect x="169.8" y="10.2" width="4.90" height="5.15" fill-opacity="0.2"/><rect x="174.6" y="10.2" width="4.90" height="5.15" fill-opacity="0.45"/><rect x="179.4" y="10.2" width="4.90" height="5.15" fill-opacity="0.2"/><rect x="72.8" y="15.3" width="4.85" height="4" fill-opacity="0.3"/></svg>
<div class="t" style="left:612.0px;top:566.8px;font-size:16.0px;font-weight:400;color:#0064c8;">e</div>
<div style="position:absolute;left:295px;top:609px;width:600px;height:1px;background:#e3e6ea"></div>
<div style="position:absolute;left:317px;top:636px;width:19px;height:19px;border:1px solid #5f7594;border-radius:3px;background:#fff"></div>
<div class="t" style="left:384.5px;top:639.2px;font-size:16.0px;font-weight:400;color:#0064c8;">Aliyun</div>
<svg style="position:absolute;left:423px;top:639.1px" width="114" height="21" fill="#2f78d8" ><rect x="4.8" y="0.0" width="4.90" height="5.15" fill-opacity="0.15"/><rect x="14.5" y="0.0" width="4.90" height="5.15" fill-opacity="0.45"/><rect x="24.2" y="0.0" width="4.90" height="5.15" fill-opacity="0.3"/><rect x="29.1" y="0.0" width="4.90" height="5.15" fill-opacity="0.25"/><rect x="33.9" y="0.0" width="4.90" height="5.15" fill-opacity="0.3"/><rect x="43.6" y="0.0" width="4.90" height="5.15" fill-opacity="0.45"/><rect x="53.3" y="0.0" width="4.90" height="5.15" fill-opacity="0.25"/><rect x="58.2" y="0.0" width="4.90" height="5.15" fill-opacity="0.15"/><rect x="63.0" y="0.0" width="4.90" height="5.15" fill-opacity="0.3"/><rect x="67.9" y="0.0" width="4.90" height="5.15" fill-opacity="0.3"/><rect x="72.8" y="0.0" width="4.90" height="5.15" fill-opacity="0.3"/><rect x="77.6" y="0.0" width="4.90" height="5.15" fill-opacity="0.3"/><rect x="87.3" y="0.0" width="4.90" height="5.15" fill-opacity="0.35"/><rect x="92.1" y="0.0" width="4.90" height="5.15" fill-opacity="0.15"/><rect x="97.0" y="0.0" width="4.90" height="5.15" fill-opacity="0.25"/><rect x="101.8" y="0.0" width="4.90" height="5.15" fill-opacity="0.3"/><rect x="106.7" y="0.0" width="4.90" height="5.15" fill-opacity="0.3"/><rect x="0.0" y="5.1" width="4.90" height="5.15" fill-opacity="0.65"/><rect x="4.8" y="5.1" width="4.90" height="5.15" fill-opacity="0.4"/><rect x="9.7" y="5.1" width="4.90" height="5.15" fill-opacity="0.45"/><rect x="14.5" y="5.1" width="4.90" height="5.15" fill-opacity="0.3"/><rect x="19.4" y="5.1" width="4.90" height="5.15" fill-opacity="0.55"/><rect x="24.2" y="5.1" width="4.90" height="5.15" fill-opacity="0.45"/><rect x="29.1" y="5.1" width="4.90" height="5.15" fill-opacity="0.35"/><rect x="33.9" y="5.1" width="4.90" height="5.15" fill-opacity="0.45"/><rect x="38.8" y="5.1" width="4.90" height="5.15" fill-opacity="0.3"/><rect x="43.6" y="5.1" width="4.90" height="5.15" fill-opacity="0.65"/><rect x="48.5" y="5.1" width="4.90" height="5.15" fill-opacity="0.4"/><rect x="53.3" y="5.1" width="4.90" height="5.15" fill-opacity="0.3"/><rect x="58.2" y="5.1" width="4.90" height="5.15" fill-opacity="0.4"/><rect x="63.0" y="5.1" width="4.90" height="5.15" fill-opacity="0.15"/><rect x="67.9" y="5.1" width="4.90" height="5.15" fill-opacity="0.4"/><rect x="72.8" y="5.1" width="4.90" height="5.15" fill-opacity="0.4"/><rect x="77.6" y="5.1" width="4.90" height="5.15" fill-opacity="0.35"/><rect x="82.4" y="5.1" width="4.90" height="5.15" fill-opacity="0.15"/><rect x="87.3" y="5.1" width="4.90" height="5.15" fill-opacity="0.55"/><rect x="92.1" y="5.1" width="4.90" height="5.15" fill-opacity="0.3"/><rect x="97.0" y="5.1" width="4.90" height="5.15" fill-opacity="0.4"/><rect x="101.8" y="5.1" width="4.90" height="5.15" fill-opacity="0.15"/><rect x="106.7" y="5.1" width="4.90" height="5.15" fill-opacity="0.3"/><rect x="0.0" y="10.2" width="4.90" height="5.15" fill-opacity="0.55"/><rect x="4.8" y="10.2" width="4.90" height="5.15" fill-opacity="0.35"/><rect x="9.7" y="10.2" width="4.90" height="5.15" fill-opacity="0.2"/><rect x="14.5" y="10.2" width="4.90" height="5.15" fill-opacity="0.3"/><rect x="19.4" y="10.2" width="4.90" height="5.15" fill-opacity="0.55"/><rect x="24.2" y="10.2" width="4.90" height="5.15" fill-opacity="0.55"/><rect x="29.1" y="10.2" width="4.90" height="5.15" fill-opacity="0.55"/><rect x="33.9" y="10.2" width="4.90" height="5.15" fill-opacity="0.35"/><rect x="38.8" y="10.2" width="4.90" height="5.15" fill-opacity="0.3"/><rect x="43.6" y="10.2" width="4.90" height="5.15" fill-opacity="0.35"/><rect x="48.5" y="10.2" width="4.90" height="5.15" fill-opacity="0.3"/><rect x="53.3" y="10.2" width="4.90" height="5.15" fill-opacity="0.4"/><rect x="58.2" y="10.2" width="4.90" height="5.15" fill-opacity="0.3"/><rect x="63.0" y="10.2" width="4.90" height="5.15" fill-opacity="0.55"/><rect x="67.9" y="10.2" width="4.90" height="5.15" fill-opacity="0.2"/><rect x="72.8" y="10.2" width="4.90" height="5.15" fill-opacity="0.4"/><rect x="77.6" y="10.2" width="4.90" height="5.15" fill-opacity="0.4"/><rect x="82.4" y="10.2" width="4.90" height="5.15" fill-opacity="0.3"/><rect x="87.3" y="10.2" width="4.90" height="5.15" fill-opacity="0.55"/><rect x="92.1" y="10.2" width="4.90" height="5.15" fill-opacity="0.3"/><rect x="97.0" y="10.2" width="4.90" height="5.15" fill-opacity="0.3"/><rect x="101.8" y="10.2" width="4.90" height="5.15" fill-opacity="0.55"/><rect x="106.7" y="10.2" width="4.90" height="5.15" fill-opacity="0.4"/><rect x="77.6" y="15.3" width="4.85" height="4" fill-opacity="0.3"/></svg>
<div style="position:absolute;left:295px;top:682px;width:600px;height:1px;background:#e3e6ea"></div>
<div style="position:absolute;left:317px;top:708px;width:19px;height:19px;border:1px solid #5f7594;border-radius:3px;background:#fff"></div>
<div class="t" style="left:384.5px;top:711.6px;font-size:16.0px;font-weight:400;color:#0064c8;">Aliyun</div>
<svg style="position:absolute;left:426px;top:711.5px" width="161" height="21" fill="#2f78d8" ><rect x="0.0" y="0.0" width="4.90" height="5.15" fill-opacity="0.25"/><rect x="4.8" y="0.0" width="4.90" height="5.15" fill-opacity="0.15"/><rect x="9.7" y="0.0" width="4.90" height="5.15" fill-opacity="0.25"/><rect x="19.4" y="0.0" width="4.90" height="5.15" fill-opacity="0.15"/><rect x="24.2" y="0.0" width="4.90" height="5.15" fill-opacity="0.15"/><rect x="33.9" y="0.0" width="4.90" height="5.15" fill-opacity="0.35"/><rect x="38.8" y="0.0" width="4.90" height="5.15" fill-opacity="0.15"/><rect x="48.5" y="0.0" width="4.90" height="5.15" fill-opacity="0.15"/><rect x="53.3" y="0.0" width="4.90" height="5.15" fill-opacity="0.3"/><rect x="58.2" y="0.0" width="4.90" height="5.15" fill-opacity="0.25"/><rect x="63.0" y="0.0" width="4.90" height="5.15" fill-opacity="0.25"/><rect x="67.9" y="0.0" width="4.90" height="5.15" fill-opacity="0.35"/><rect x="77.6" y="0.0" width="4.90" height="5.15" fill-opacity="0.25"/><rect x="82.4" y="0.0" width="4.90" height="5.15" fill-opacity="0.15"/><rect x="87.3" y="0.0" width="4.90" height="5.15" fill-opacity="0.3"/><rect x="92.1" y="0.0" width="4.90" height="5.15" fill-opacity="0.3"/><rect x="97.0" y="0.0" width="4.90" height="5.15" fill-opacity="0.15"/><rect x="101.8" y="0.0" width="4.90" height="5.15" fill-opacity="0.3"/><rect x="116.4" y="0.0" width="4.90" height="5.15" fill-opacity="0.45"/><rect x="135.8" y="0.0" width="4.90" height="5.15" fill-opacity="0.15"/><rect x="140.6" y="0.0" width="4.90" height="5.15" fill-opacity="0.15"/><rect x="150.3" y="0.0" width="4.90" height="5.15" fill-opacity="0.45"/><rect x="0.0" y="5.1" width="4.90" height="5.15" fill-opacity="0.35"/><rect x="4.8" y="5.1" width="4.90" height="5.15" fill-opacity="0.65"/><rect x="9.7" y="5.1" width="4.90" height="5.15" fill-opacity="0.3"/><rect x="14.5" y="5.1" width="4.90" height="5.15" fill-opacity="0.65"/><rect x="19.4" y="5.1" width="4.90" height="5.15" fill-opacity="0.4"/><rect x="24.2" y="5.1" width="4.90" height="5.15" fill-opacity="0.65"/><rect x="29.1" y="5.1" width="4.90" height="5.15" fill-opacity="0.55"/><rect x="33.9" y="5.1" width="4.90" height="5.15" fill-opacity="0.65"/><rect x="38.8" y="5.1" width="4.90" height="5.15" fill-opacity="0.35"/><rect x="43.6" y="5.1" width="4.90" height="5.15" fill-opacity="0.4"/><rect x="48.5" y="5.1" width="4.90" height="5.15" fill-opacity="0.3"/><rect x="53.3" y="5.1" width="4.90" height="5.15" fill-opacity="0.45"/><rect x="58.2" y="5.1" width="4.90" height="5.15" fill-opacity="0.45"/><rect x="63.0" y="5.1" width="4.90" height="5.15" fill-opacity="0.45"/><rect x="67.9" y="5.1" width="4.90" height="5.15" fill-opacity="0.4"/><rect x="72.8" y="5.1" width="4.90" height="5.15" fill-opacity="0.55"/><rect x="77.6" y="5.1" width="4.90" height="5.15" fill-opacity="0.35"/><rect x="82.4" y="5.1" width="4.90" height="5.15" fill-opacity="0.15"/><rect x="87.3" y="5.1" width="4.90" height="5.15" fill-opacity="0.35"/><rect x="92.1" y="5.1" width="4.90" height="5.15" fill-opacity="0.15"/><rect x="97.0" y="5.1" width="4.90" height="5.15" fill-opacity="0.65"/><rect x="101.8" y="5.1" width="4.90" height="5.15" fill-opacity="0.55"/><rect x="106.7" y="5.1" width="4.90" height="5.15" fill-opacity="0.3"/><rect x="111.5" y="5.1" width="4.90" height="5.15" fill-opacity="0.4"/><rect x="116.4" y="5.1" width="4.90" height="5.15" fill-opacity="0.15"/><rect x="121.2" y="5.1" width="4.90" height="5.15" fill-opacity="0.35"/><rect x="126.1" y="5.1" width="4.90" height="5.15" fill-opacity="0.15"/><rect x="130.9" y="5.1" width="4.90" height="5.15" fill-opacity="0.55"/><rect x="135.8" y="5.1" width="4.90" height="5.15" fill-opacity="0.15"/><rect x="140.6" y="5.1" width="4.90" height="5.15" fill-opacity="0.65"/><rect x="145.5" y="5.1" width="4.90" height="5.15" fill-opacity="0.35"/><rect x="150.3" y="5.1" width="4.90" height="5.15" fill-opacity="0.15"/><rect x="155.2" y="5.1" width="4.90" height="5.15" fill-opacity="0.45"/><rect x="0.0" y="10.2" width="4.90" height="5.15" fill-opacity="0.3"/><rect x="4.8" y="10.2" width="4.90" height="5.15" fill-opacity="0.2"/><rect x="9.7" y="10.2" width="4.90" height="5.15" fill-opacity="0.35"/><rect x="14.5" y="10.2" width="4.90" height="5.15" fill-opacity="0.2"/><rect x="19.4" y="10.2" width="4.90" height="5.15" fill-opacity="0.4"/><rect x="24.2" y="10.2" width="4.90" height="5.15" fill-opacity="0.2"/><rect x="29.1" y="10.2" width="4.90" height="5.15" fill-opacity="0.35"/><rect x="33.9" y="10.2" width="4.90" height="5.15" fill-opacity="0.45"/><rect x="38.8" y="10.2" width="4.90" height="5.15" fill-opacity="0.4"/><rect x="43.6" y="10.2" width="4.90" height="5.15" fill-opacity="0.35"/><rect x="48.5" y="10.2" width="4.90" height="5.15" fill-opacity="0.45"/><rect x="53.3" y="10.2" width="4.90" height="5.15" fill-opacity="0.3"/><rect x="58.2" y="10.2" width="4.90" height="5.15" fill-opacity="0.2"/><rect x="63.0" y="10.2" width="4.90" height="5.15" fill-opacity="0.45"/><rect x="67.9" y="10.2" width="4.90" height="5.15" fill-opacity="0.55"/><rect x="72.8" y="10.2" width="4.90" height="5.15" fill-opacity="0.3"/><rect x="77.6" y="10.2" width="4.90" height="5.15" fill-opacity="0.2"/><rect x="82.4" y="10.2" width="4.90" height="5.15" fill-opacity="0.3"/><rect x="87.3" y="10.2" width="4.90" height="5.15" fill-opacity="0.35"/><rect x="92.1" y="10.2" width="4.90" height="5.15" fill-opacity="0.2"/><rect x="97.0" y="10.2" width="4.90" height="5.15" fill-opacity="0.3"/><rect x="101.8" y="10.2" width="4.90" height="5.15" fill-opacity="0.3"/><rect x="106.7" y="10.2" width="4.90" height="5.15" fill-opacity="0.35"/><rect x="111.5" y="10.2" width="4.90" height="5.15" fill-opacity="0.55"/><rect x="116.4" y="10.2" width="4.90" height="5.15" fill-opacity="0.35"/><rect x="121.2" y="10.2" width="4.90" height="5.15" fill-opacity="0.45"/><rect x="126.1" y="10.2" width="4.90" height="5.15" fill-opacity="0.3"/><rect x="130.9" y="10.2" width="4.90" height="5.15" fill-opacity="0.35"/><rect x="135.8" y="10.2" width="4.90" height="5.15" fill-opacity="0.4"/><rect x="140.6" y="10.2" width="4.90" height="5.15" fill-opacity="0.45"/><rect x="145.5" y="10.2" width="4.90" height="5.15" fill-opacity="0.55"/><rect x="150.3" y="10.2" width="4.90" height="5.15" fill-opacity="0.3"/><rect x="155.2" y="10.2" width="4.90" height="5.15" fill-opacity="0.35"/><rect x="106.7" y="15.3" width="4.85" height="4" fill-opacity="0.3"/></svg>
<div style="position:absolute;left:0px;top:0px;width:714px;height:749px;background:rgba(0,0,0,0.445)"></div>
<div style="position:absolute;left:714px;top:0px;width:1129px;height:749px;background:#fff"></div>
<div style="position:absolute;left:714px;top:79px;width:1129px;height:1px;background:#e3e3e3"></div>
<div class="t" style="left:746.7px;top:29.8px;font-size:23.4px;font-weight:400;color:#333;">Grant Permission</div>
<svg style="position:absolute;left:750px;top:113.5px" width="11" height="7" viewBox="0 0 11 7"><polygon points="0,0 11,0 5.5,6.5" fill="#333"/></svg>
<div class="t" style="left:765.9px;top:108.7px;font-size:14.95px;font-weight:700;color:#333;">Resource Scope</div>
<svg style="position:absolute;left:751px;top:147px" width="22" height="22" viewBox="0 0 22 22"><circle cx="10.5" cy="10.5" r="8.9" fill="#fff" stroke="#1f5799" stroke-width="1.25"/><circle cx="10.5" cy="10.5" r="5.6" fill="#0064c8"/></svg>
<div class="t" style="left:782.7px;top:150.3px;font-size:15.5px;font-weight:400;color:#333;">Account</div>
<svg style="position:absolute;left:866px;top:147px" width="22" height="22" viewBox="0 0 22 22"><circle cx="10.5" cy="10.5" r="8.9" fill="#fff" stroke="#2f6ab0" stroke-width="1.1"/></svg>
<div class="t" style="left:896.9px;top:150.6px;font-size:15.4px;font-weight:400;color:#333;">ResourceGroup</div>
<svg style="position:absolute;left:1012.5px;top:151.5px" width="15" height="15" viewBox="0 0 15 15"><circle cx="7.5" cy="7.5" r="6.7" fill="none" stroke="#3a3a3a" stroke-width="1.15"/><path d="M5.3 5.8 Q5.3 3.7 7.5 3.7 Q9.7 3.7 9.7 5.6 Q9.7 6.9 7.5 7.6 V9" fill="none" stroke="#555" stroke-width="1.2"/><circle cx="7.5" cy="11" r="0.8" fill="#555"/></svg>
<svg style="position:absolute;left:750px;top:206.5px" width="11" height="7" viewBox="0 0 11 7"><polygon points="0,0 11,0 5.5,6.5" fill="#333"/></svg>
<div class="t" style="left:766.0px;top:200.9px;font-size:15.4px;font-weight:700;color:#333;">Principal</div>
<div class="t" style="left:752.5px;top:242.0px;font-size:15.6px;font-weight:400;color:#333;">Selected Principal</div>
<div style="position:absolute;left:752px;top:272px;width:1087px;height:61px;border:1px solid #e6e9ee;border-radius:4px;background:#f6f9fc"></div>
<div style="position:absolute;left:764px;top:284px;width:525px;height:37px;border:1px solid #c9cbd0;border-radius:3px;background:#fff"></div>
<div class="t" style="left:776.3px;top:295.9px;font-size:16.45px;font-weight:400;color:#333;">dev-role-for-rrsa@role.</div>
<svg style="position:absolute;left:942px;top:296px" width="128" height="14" fill="#333"><rect x="0.00" y="0.00" width="4.62" height="4.62" fill-opacity="0.35"/><rect x="4.57" y="0.00" width="4.62" height="4.62" fill-opacity="0.35"/><rect x="9.14" y="0.00" width="4.62" height="4.62" fill-opacity="0.35"/><rect x="13.71" y="0.00" width="4.62" height="4.62" fill-opacity="0.18"/><rect x="18.28" y="0.00" width="4.62" height="4.62" fill-opacity="0.12"/><rect x="22.85" y="0.00" width="4.62" height="4.62" fill-opacity="0.35"/><rect x="27.42" y="0.00" width="4.62" height="4.62" fill-opacity="0.12"/><rect x="31.99" y="0.00" width="4.62" height="4.62" fill-opacity="0.08"/><rect x="36.56" y="0.00" width="4.62" height="4.62" fill-opacity="0.35"/><rect x="41.13" y="0.00" width="4.62" height="4.62" fill-opacity="0.22"/><rect x="45.70" y="0.00" width="4.62" height="4.62" fill-opacity="0.12"/><rect x="50.27" y="0.00" width="4.62" height="4.62" fill-opacity="0.08"/><rect x="54.84" y="0.00" width="4.62" height="4.62" fill-opacity="0.02"/><rect x="59.41" y="0.00" width="4.62" height="4.62" fill-opacity="0.3"/><rect x="63.98" y="0.00" width="4.62" height="4.62" fill-opacity="0.35"/><rect x="68.55" y="0.00" width="4.62" height="4.62" fill-opacity="0.12"/><rect x="73.12" y="0.00" width="4.62" height="4.62" fill-opacity="0.02"/><rect x="77.69" y="0.00" width="4.62" height="4.62" fill-opacity="0.08"/><rect x="82.26" y="0.00" width="4.62" height="4.62" fill-opacity="0.02"/><rect x="86.83" y="0.00" width="4.62" height="4.62" fill-opacity="0.02"/><rect x="91.40" y="0.00" width="4.62" height="4.62" fill-opacity="0.18"/><rect x="95.97" y="0.00" width="4.62" height="4.62" fill-opacity="0.18"/><rect x="100.54" y="0.00" width="4.62" height="4.62" fill-opacity="0.02"/><rect x="105.11" y="0.00" width="4.62" height="4.62" fill-opacity="0.35"/><rect x="109.68" y="0.00" width="4.62" height="4.62" fill-opacity="0.26"/><rect x="114.25" y="0.00" width="4.62" height="4.62" fill-opacity="0.35"/><rect x="118.82" y="0.00" width="4.62" height="4.62" fill-opacity="0.18"/><rect x="123.39" y="0.00" width="4.62" height="4.62" fill-opacity="0.18"/><rect x="0.00" y="4.57" width="4.62" height="4.62" fill-opacity="0.22"/><rect x="4.57" y="4.57" width="4.62" height="4.62" fill-opacity="0.35"/><rect x="9.14" y="4.57" width="4.62" height="4.62" fill-opacity="0.02"/><rect x="13.71" y="4.57" width="4.62" height="4.62" fill-opacity="0.08"/><rect x="18.28" y="4.57" width="4.62" height="4.62" fill-opacity="0.35"/><rect x="22.85" y="4.57" width="4.62" height="4.62" fill-opacity="0.22"/><rect x="27.42" y="4.57" width="4.62" height="4.62" fill-opacity="0.3"/><rect x="31.99" y="4.57" width="4.62" height="4.62" fill-opacity="0.08"/><rect x="36.56" y="4.57" width="4.62" height="4.62" fill-opacity="0.22"/><rect x="41.13" y="4.57" width="4.62" height="4.62" fill-opacity="0.26"/><rect x="45.70" y="4.57" width="4.62" height="4.62" fill-opacity="0.18"/><rect x="50.27" y="4.57" width="4.62" height="4.62" fill-opacity="0.22"/><rect x="54.84" y="4.57" width="4.62" height="4.62" fill-opacity="0.02"/><rect x="59.41" y="4.57" width="4.62" height="4.62" fill-opacity="0.08"/><rect x="63.98" y="4.57" width="4.62" height="4.62" fill-opacity="0.08"/><rect x="68.55" y="4.57" width="4.62" height="4.62" fill-opacity="0.3"/><rect x="73.12" y="4.57" width="4.62" height="4.62" fill-opacity="0.08"/><rect x="77.69" y="4.57" width="4.62" height="4.62" fill-opacity="0.22"/><rect x="82.26" y="4.57" width="4.62" height="4.62" fill-opacity="0.3"/><rect x="86.83" y="4.57" width="4.62" height="4.62" fill-opacity="0.08"/><rect x="91.40" y="4.57" width="4.62" height="4.62" fill-opacity="0.02"/><rect x="95.97" y="4.57" width="4.62" height="4.62" fill-opacity="0.02"/><rect x="100.54" y="4.57" width="4.62" height="4.62" fill-opacity="0.18"/><rect x="105.11" y="4.57" width="4.62" height="4.62" fill-opacity="0.18"/><rect x="109.68" y="4.57" width="4.62" height="4.62" fill-opacity="0.02"/><rect x="114.25" y="4.57" width="4.62" height="4.62" fill-opacity="0.35"/><rect x="118.82" y="4.57" width="4.62" height="4.62" fill-opacity="0.3"/><rect x="123.39" y="4.57" width="4.62" height="4.62" fill-opacity="0.3"/><rect x="0.00" y="9.14" width="4.62" height="4.62" fill-opacity="0.3"/><rect x="4.57" y="9.14" width="4.62" height="4.62" fill-opacity="0.08"/><rect x="9.14" y="9.14" width="4.62" height="4.62" fill-opacity="0.18"/><rect x="13.71" y="9.14" width="4.62" height="4.62" fill-opacity="0.22"/><rect x="18.28" y="9.14" width="4.62" height="4.62" fill-opacity="0.26"/><rect x="22.85" y="9.14" width="4.62" height="4.62" fill-opacity="0.08"/><rect x="27.42" y="9.14" width="4.62" height="4.62" fill-opacity="0.22"/><rect x="31.99" y="9.14" width="4.62" height="4.62" fill-opacity="0.26"/><rect x="36.56" y="9.14" width="4.62" height="4.62" fill-opacity="0.02"/><rect x="41.13" y="9.14" width="4.62" height="4.62" fill-opacity="0.3"/><rect x="45.70" y="9.14" width="4.62" height="4.62" fill-opacity="0.08"/><rect x="50.27" y="9.14" width="4.62" height="4.62" fill-opacity="0.12"/><rect x="54.84" y="9.14" width="4.62" height="4.62" fill-opacity="0.18"/><rect x="59.41" y="9.14" width="4.62" height="4.62" fill-opacity="0.08"/><rect x="63.98" y="9.14" width="4.62" height="4.62" fill-opacity="0.02"/><rect x="68.55" y="9.14" width="4.62" height="4.62" fill-opacity="0.02"/><rect x="73.12" y="9.14" width="4.62" height="4.62" fill-opacity="0.35"/><rect x="77.69" y="9.14" width="4.62" height="4.62" fill-opacity="0.35"/><rect x="82.26" y="9.14" width="4.62" height="4.62" fill-opacity="0.12"/><rect x="86.83" y="9.14" width="4.62" height="4.62" fill-opacity="0.18"/><rect x="91.40" y="9.14" width="4.62" height="4.62" fill-opacity="0.35"/><rect x="95.97" y="9.14" width="4.62" height="4.62" fill-opacity="0.18"/><rect x="100.54" y="9.14" width="4.62" height="4.62" fill-opacity="0.12"/><rect x="105.11" y="9.14" width="4.62" height="4.62" fill-opacity="0.3"/><rect x="109.68" y="9.14" width="4.62" height="4.62" fill-opacity="0.3"/><rect x="114.25" y="9.14" width="4.62" height="4.62" fill-opacity="0.08"/><rect x="118.82" y="9.14" width="4.62" height="4.62" fill-opacity="0.3"/><rect x="123.39" y="9.14" width="4.62" height="4.62" fill-opacity="0.3"/></svg>
<div class="t" style="left:1070.8px;top:296.9px;font-size:15.85px;font-weight:400;color:#333;">1.onaliyunservice.com</div>
<svg style="position:absolute;left:750px;top:373px" width="11" height="7" viewBox="0 0 11 7"><polygon points="0,0 11,0 5.5,6.5" fill="#333"/></svg>
<div class="t" style="left:765.7px;top:368.6px;font-size:14.9px;font-weight:700;color:#333;">Policy</div>
<div style="position:absolute;left:752px;top:403px;width:723px;height:400px;border:1px solid #e3e3e3;border-radius:3px;background:#fff"></div>
<div style="position:absolute;left:764px;top:415px;width:302px;height:42px;border:1px solid #d9dbe0;border-radius:3px;background:#fff"></div>
<div style="position:absolute;left:1022px;top:415px;width:1px;height:44px;background:#e3e3e3"></div>
<div class="t" style="left:781.4px;top:429.7px;font-size:16.55px;font-weight:400;color:#333;">dev-role-for-rrsa-kms-policy</div>
<svg style="position:absolute;left:1035px;top:426px" width="20" height="20" viewBox="0 0 20 20"><circle cx="8.5" cy="8.3" r="6.5" fill="none" stroke="#333" stroke-width="1.5"/><line x1="13.2" y1="13" x2="18" y2="17.8" stroke="#333" stroke-width="1.6"/></svg>
<div style="position:absolute;left:1077px;top:415px;width:133px;height:41px;border:1px solid #c9cbd0;border-radius:3px;background:#fff"></div>
<div class="t" style="left:1094.0px;top:428.9px;font-size:15.3px;font-weight:400;color:#333;">All Types</div>
<svg style="position:absolute;left:1183px;top:432px" width="18" height="11" viewBox="0 0 18 11"><polyline points="1.5,1.5 9,9 16.5,1.5" fill="none" stroke="#7a7a7a" stroke-width="1.8"/></svg>
<div style="position:absolute;left:1422px;top:415px;width:42px;height:41px;border:1px solid #c9cbd0;border-radius:3px;background:#fff"></div>
<svg style="position:absolute;left:1436px;top:430px" width="16" height="16" viewBox="0 0 16 16"><path d="M12.6 8 A4.6 4.6 0 1 1 9.5 3.6" fill="none" stroke="#444" stroke-width="1.3"/><polygon points="8.2,1.6 11.4,3.9 8.0,5.6" fill="#444"/></svg>
<div style="position:absolute;left:764px;top:469px;width:702px;height:90px;background:#eef1f6"></div>
<div style="position:absolute;left:764px;top:513px;width:679px;height:1px;background:#dcdfe4"></div>
<div style="position:absolute;left:774px;top:480px;width:20px;height:20px;border:1px solid #1d56a0;border-radius:3px;background:#0064c8"></div>
<svg style="position:absolute;left:774px;top:480px" width="22" height="22" viewBox="0 0 22 22"><polyline points="3.2,10.2 8.2,15.2 18.5,5.2" fill="none" stroke="#fff" stroke-width="2.7"/></svg>
<div style="position:absolute;left:774px;top:526px;width:20px;height:20px;border:1px solid #1d56a0;border-radius:3px;background:#0064c8"></div>
<svg style="position:absolute;left:774px;top:526px" width="22" height="22" viewBox="0 0 22 22"><polyline points="3.2,10.2 8.2,15.2 18.5,5.2" fill="none" stroke="#fff" stroke-width="2.7"/></svg>
<div class="t" style="left:820.4px;top:484.0px;font-size:15.55px;font-weight:400;color:#333;">Policy Name</div>
<div class="t" style="left:1084.0px;top:484.1px;font-size:15.25px;font-weight:400;color:#333;">Policy Type</div>
<div class="t" style="left:1213.7px;top:483.9px;font-size:16.0px;font-weight:400;color:#333;">Description</div>
<div class="t" style="left:820.7px;top:529.8px;font-size:16.5px;font-weight:400;color:#333;">dev-role-for-rrsa-kms-policy</div>
<div class="t" style="left:1083.8px;top:530.1px;font-size:15.55px;font-weight:400;color:#333;">Custom Policy</div>
<div class="t" style="left:1214.0px;top:530.3px;font-size:15.9px;font-weight:400;color:#333;">ack dev env get secret policy</div>
<div style="position:absolute;left:1488px;top:403px;width:351px;height:400px;border:1px solid #e3e3e3;border-radius:3px;background:#fff"></div>
<div style="position:absolute;left:1489px;top:456px;width:350px;height:1px;background:#e3e3e3"></div>
<div class="t" style="left:1500.2px;top:423.3px;font-size:15.3px;font-weight:700;color:#333;">Selected Policy</div>
<div class="t" style="left:1500.3px;top:470.5px;font-size:15.55px;font-weight:700;color:#333;">Custom Policy (1)</div>
<div class="t" style="left:1503.6px;top:509.3px;font-size:16.5px;font-weight:400;color:#333;">dev-role-for-rrsa-kms-policy</div>
<svg style="position:absolute;left:1812px;top:512px" width="13" height="13" viewBox="0 0 13 13"><path d="M1.5 1.5L11.5 11.5M11.5 1.5L1.5 11.5" fill="none" stroke="#555" stroke-width="1.1"/></svg>
<div style="position:absolute;left:714px;top:679px;width:1129px;height:70px;background:#fff"></div>
<div style="position:absolute;left:746px;top:678px;width:1097px;height:1px;background:#e3e3e3"></div>
<div style="position:absolute;left:754px;top:701px;width:176px;height:43px;background:#0064c8;border-radius:3px"></div>
<div class="t" style="left:776.1px;top:715.0px;font-size:15.0px;font-weight:700;color:#fff;">Grant permissions</div>
<div style="position:absolute;left:941px;top:701px;width:100px;height:41px;border:1px solid #c9cbd0;border-radius:3px;background:#fff"></div>
<div class="t" style="left:968.4px;top:715.9px;font-size:14.4px;font-weight:700;color:#333;">Cancel</div>
<div style="position:absolute;left:15px;top:301px;width:111px;height:35px;border:3px solid #ff6c00"></div>
<div style="position:absolute;left:373px;top:266px;width:141px;height:38px;border:3px solid #ff6c00"></div>
<div style="position:absolute;left:751px;top:412px;width:313px;height:44px;border:3px solid #ff6c00"></div>
<div style="position:absolute;left:0px;top:0px;width:1843px;height:5px;background:linear-gradient(rgba(0,0,0,0.13),rgba(0,0,0,0))"></div>
</body></html>
